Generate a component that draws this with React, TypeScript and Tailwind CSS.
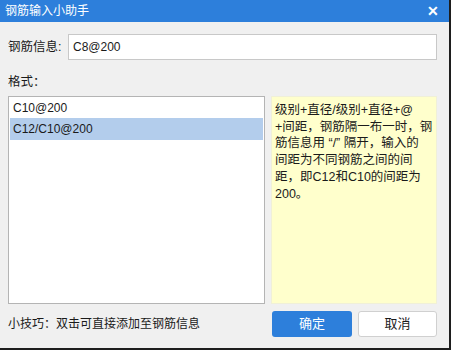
export default function App() {
  const font = { fontFamily: '"Liberation Sans", "Noto Sans CJK SC", sans-serif' };
  const tips = [
    '级别+直径/级别+直径+@',
    '+间距，钢筋隔一布一时，钢',
    '筋信息用 “/” 隔开，输入的',
    '间距为不同钢筋之间的间',
    '距，即C12和C10的间距为',
    '200。',
  ];
  return (
    <div className="w-[451px] h-[350px] bg-[#1e1e1e] overflow-hidden" style={font}>
      <div className="w-[449px] h-[348px] flex flex-col bg-[#f0f0f0] text-[12px] text-[#1a1a1a]">
        {/* Title bar */}
        <div className="h-[22px] bg-[#2d7fdb] flex items-center justify-between pl-[5px] pr-[10px] text-white">
          <span className="text-[12px]">钢筋输入小助手</span>
          <span className="text-[14px] font-bold leading-none">✕</span>
        </div>

        {/* Info row */}
        <div className="flex items-center mt-[12px] pl-[8px] pr-[12px]">
          <span className="w-[60px] text-[12.5px]">钢筋信息:</span>
          <div className="flex-1 h-[26px] bg-white border border-[#c8c8c8] flex items-center pl-[4px]">
            C8@200
          </div>
        </div>

        <div className="pl-[8px] mt-[13px] text-[12.5px] leading-[18px]">格式：</div>

        {/* Main area */}
        <div className="flex mt-[5px] pl-[8px] pr-[12px] gap-[6px] h-[208px]">
          <div className="w-[257px] bg-white border border-[#b4b4b4] p-[1px] flex flex-col">
            <div className="h-[20px] flex items-center pl-[3px]">C10@200</div>
            <div className="h-[22px] flex items-center pl-[3px] bg-[#b3cdec]">C12/C10@200</div>
          </div>
          <div className="flex-1 bg-[#ffffcc] border border-[#f0f0d8] pl-[3px] pr-[2px] pt-[5px] leading-[16.7px] text-[12.5px] whitespace-nowrap overflow-hidden">
            {tips.map((t) => (
              <div key={t}>{t}</div>
            ))}
          </div>
        </div>

        {/* Footer */}
        <div className="flex items-center mt-[7px] pl-[8px] pr-[12px]">
          <span className="flex-1 text-[12px]">小技巧：双击可直接添加至钢筋信息</span>
          <button className="w-[80px] h-[26px] rounded-[3px] bg-[#2d7fdb] text-white text-[13px]">确定</button>
          <button className="w-[79px] h-[26px] ml-[6px] rounded-[3px] bg-white border border-[#d0d0d0] text-[13px]">取消</button>
        </div>
      </div>
    </div>
  );
}
